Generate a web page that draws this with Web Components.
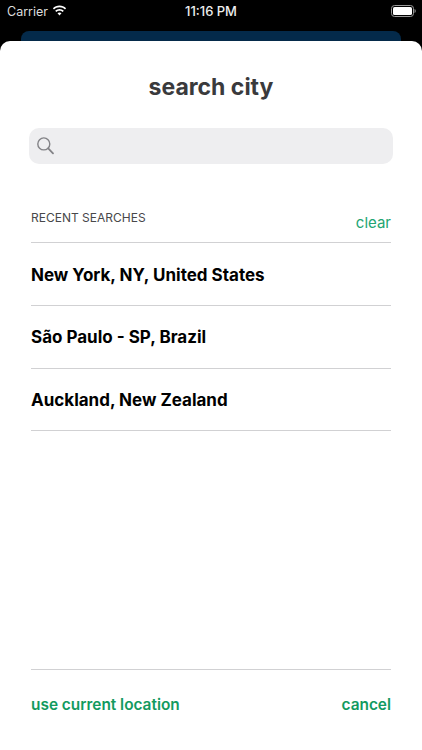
<!DOCTYPE html>
<html>
<head>
<meta charset="utf-8">
<style>
  html, body { margin: 0; height: 100%; background: #000; }
  body { font-family: Inter, "Liberation Sans", sans-serif; overflow: hidden; }
</style>
</head>
<body>
<status-bar></status-bar>
<search-sheet>
  <recent-row>New York, NY, United States</recent-row>
  <recent-row>São Paulo - SP, Brazil</recent-row>
  <recent-row>Auckland, New Zealand</recent-row>
</search-sheet>

<script>
class StatusBar extends HTMLElement {
  constructor() {
    super();
    this.attachShadow({ mode: 'open' });
    this.shadowRoot.innerHTML = `
      <style>
        :host { display: block; background: #000; color: #fff; height: 41px; overflow: hidden; }
        .bar { height: 22px; display: grid; grid-template-columns: 1fr auto 1fr; align-items: center; padding: 0 6px 0 7px; font-size: 12.5px; }
        .left { display: flex; align-items: center; gap: 4px; color: #ddd; }
        .left svg { margin-top: -2px; }
        .time { font-weight: 500; font-size: 13px; color: #eee; margin-left: -1px; }
        .right { display: flex; justify-content: flex-end; }
        .peek { height: 10px; margin: 9px 21px 0; background: #042a4a; border-radius: 8px 8px 0 0; }
      </style>
      <div class="bar">
        <div class="left">
          <span>Carrier</span>
          <svg width="15" height="11" viewBox="0 0 15 11"><path fill="#fff" d="M7.5 2.3c2.1 0 4 .8 5.5 2.2l1.1-1.2C12.3 1.6 10 .6 7.5.6S2.700 1.600.9 3.300L2 4.500C3.500 3.100 5.400 2.300 7.500 2.300zM7.500 5.700c1.200 0 2.300.4 3.200 1.300l1.100-1.200C10.600 4.700 9.100 4 7.500 4s-3.100.7-4.300 1.800L4.300 7C5.200 6.100 6.300 5.700 7.500 5.700zM7.500 7.400c-.8 0-1.500.3-2 .8l2 2.200 2-2.200C9 7.700 8.300 7.400 7.500 7.400z"/></svg>
        </div>
        <div class="time">11:16 PM</div>
        <div class="right">
          <svg width="25" height="12" viewBox="0 0 25 12"><rect x=".5" y=".5" width="22" height="11" rx="3" fill="none" stroke="#999"/><rect x="2" y="2" width="19" height="8" rx="1.600" fill="#fff"/><path d="M23.500 4v4c.8-.3 1.300-1.100 1.300-2s-.5-1.700-1.300-2z" fill="#888"/></svg>
        </div>
      </div>
      <div class="peek"></div>`;
  }
}
customElements.define('status-bar', StatusBar);

class SearchField extends HTMLElement {
  constructor() {
    super();
    this.attachShadow({ mode: 'open' });
    this.shadowRoot.innerHTML = `
      <style>
        :host { display: flex; align-items: center; height: 36px; margin: 0 29px; padding-left: 8px; background: #eeeef0; border-radius: 10px; }
        svg { display: block; }
      </style>
      <svg width="17" height="18" viewBox="0 0 17 18" fill="none" stroke="#838387" stroke-width="1.400" stroke-linecap="round"><circle cx="6.800" cy="6.900" r="6"/><path d="M11.200 11.300 16 16.300" stroke-width="1.800"/></svg>`;
  }
}
customElements.define('search-field', SearchField);

class RecentRow extends HTMLElement {
  constructor() {
    super();
    this.attachShadow({ mode: 'open' });
    this.shadowRoot.innerHTML = `
      <style>
        :host { display: flex; align-items: center; height: 60.4px; padding-top: 1.4px; border-bottom: 1px solid #d1d1d3; font-size: 17px; font-weight: 700; color: #000; }
      </style>
      <slot></slot>`;
  }
}
customElements.define('recent-row', RecentRow);

class SearchSheet extends HTMLElement {
  constructor() {
    super();
    this.attachShadow({ mode: 'open' });
    this.shadowRoot.innerHTML = `
      <style>
        :host { display: flex; flex-direction: column; height: 709px; background: #fff; border-radius: 10px 10px 0 0; }
        h1 { margin: 0; height: 87px; padding-top: 31px; box-sizing: border-box; text-align: center; font-size: 23px; line-height: 30px; font-weight: 700; color: #3a3a3c; }
        .head { display: flex; justify-content: space-between; margin: 43px 31px 0; height: 35px; border-bottom: 1px solid #d1d1d3; }
        .head span { font-size: 12px; line-height: 16px; color: #48484a; margin-top: 3px; }
        .head a { font-size: 15px; line-height: 20px; color: #22a572; margin-top: 6px; }
        .list { margin: 0 31px; flex: 1; }
        .foot { margin: 0 31px; height: 81px; border-top: 1px solid #d1d1d3; display: flex; justify-content: space-between; align-items: flex-start; padding-top: 25px; box-sizing: border-box; font-size: 15.4px; line-height: 20px; font-weight: 600; color: #129a60; }
      </style>
      <h1>search city</h1>
      <search-field></search-field>
      <div class="head"><span>RECENT SEARCHES</span><a>clear</a></div>
      <div class="list"><slot></slot></div>
      <div class="foot"><span>use current location</span><span>cancel</span></div>`;
  }
}
customElements.define('search-sheet', SearchSheet);
</script>
</body>
</html>
